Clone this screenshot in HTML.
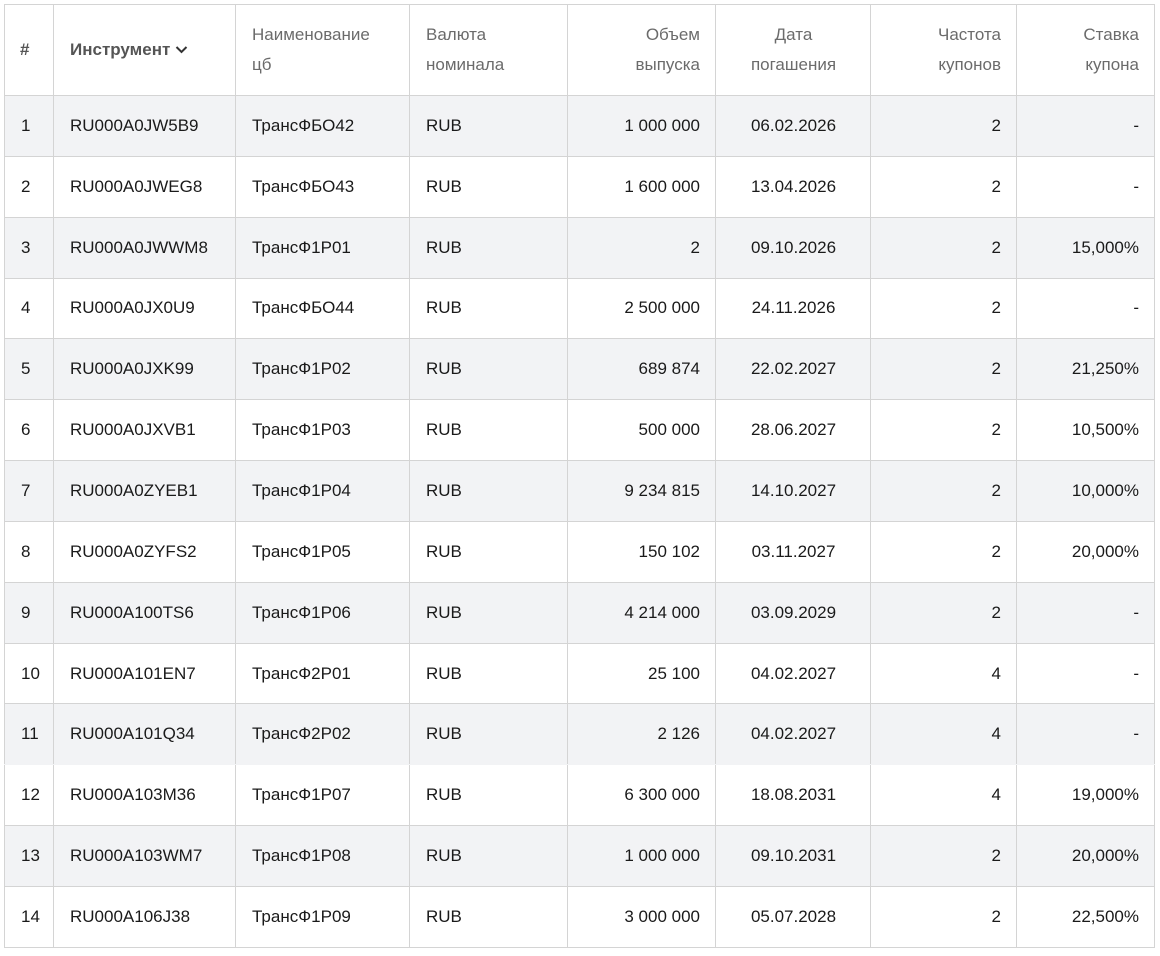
<!DOCTYPE html>
<html><head><meta charset="utf-8"><style>
body{margin:0;background:#fff;font-family:"Liberation Sans",Arial,sans-serif;}
table{position:absolute;left:4px;top:4px;border-collapse:collapse;table-layout:fixed;width:1151px;border-left:1px solid #d4d4d4;border-top:1px solid #d4d4d4;}
td,th{border-right:1px solid #d4d4d4;border-bottom:1px solid #d4d4d4;padding:0 15px 0 16px;font-size:17px;color:#1a1a1a;height:59.85px;white-space:nowrap;font-weight:normal;text-align:left;}
th{height:90px;color:#6b6b6b;font-size:17px;line-height:30px;vertical-align:middle;}
th.b{font-weight:bold;color:#555}
.r{text-align:right}.c{text-align:center}
tr.g td{background:#f2f3f5}
tr.n td{border-bottom-color:#f2f3f5}
</style></head><body>
<table>
<colgroup><col style="width:49px"><col style="width:182px"><col style="width:174px"><col style="width:158px"><col style="width:148px"><col style="width:155px"><col style="width:146px"><col style="width:138px"></colgroup>
<tr><th class="b" style="padding-left:15px">#</th><th class="b">Инструмент <svg width="13" height="9" viewBox="0 0 13 9" style="vertical-align:1px"><path d="M1.5 2l5 5 5-5" fill="none" stroke="#333" stroke-width="2"/></svg></th><th>Наименование<br>цб</th><th>Валюта<br>номинала</th><th class="r">Объем<br>выпуска</th><th class="c">Дата<br>погашения</th><th class="r">Частота<br>купонов</th><th class="r">Ставка<br>купона</th></tr>
<tr class="g"><td>1</td><td>RU000A0JW5B9</td><td>ТрансФБО42</td><td>RUB</td><td class="r">1 000 000</td><td class="c">06.02.2026</td><td class="r">2</td><td class="r">-</td></tr>
<tr><td>2</td><td>RU000A0JWEG8</td><td>ТрансФБО43</td><td>RUB</td><td class="r">1 600 000</td><td class="c">13.04.2026</td><td class="r">2</td><td class="r">-</td></tr>
<tr class="g"><td>3</td><td>RU000A0JWWM8</td><td>ТрансФ1Р01</td><td>RUB</td><td class="r">2</td><td class="c">09.10.2026</td><td class="r">2</td><td class="r">15,000%</td></tr>
<tr><td>4</td><td>RU000A0JX0U9</td><td>ТрансФБО44</td><td>RUB</td><td class="r">2 500 000</td><td class="c">24.11.2026</td><td class="r">2</td><td class="r">-</td></tr>
<tr class="g"><td>5</td><td>RU000A0JXK99</td><td>ТрансФ1Р02</td><td>RUB</td><td class="r">689 874</td><td class="c">22.02.2027</td><td class="r">2</td><td class="r">21,250%</td></tr>
<tr><td>6</td><td>RU000A0JXVB1</td><td>ТрансФ1Р03</td><td>RUB</td><td class="r">500 000</td><td class="c">28.06.2027</td><td class="r">2</td><td class="r">10,500%</td></tr>
<tr class="g"><td>7</td><td>RU000A0ZYEB1</td><td>ТрансФ1Р04</td><td>RUB</td><td class="r">9 234 815</td><td class="c">14.10.2027</td><td class="r">2</td><td class="r">10,000%</td></tr>
<tr><td>8</td><td>RU000A0ZYFS2</td><td>ТрансФ1Р05</td><td>RUB</td><td class="r">150 102</td><td class="c">03.11.2027</td><td class="r">2</td><td class="r">20,000%</td></tr>
<tr class="g"><td>9</td><td>RU000A100TS6</td><td>ТрансФ1Р06</td><td>RUB</td><td class="r">4 214 000</td><td class="c">03.09.2029</td><td class="r">2</td><td class="r">-</td></tr>
<tr><td>10</td><td>RU000A101EN7</td><td>ТрансФ2Р01</td><td>RUB</td><td class="r">25 100</td><td class="c">04.02.2027</td><td class="r">4</td><td class="r">-</td></tr>
<tr class="g n"><td>11</td><td>RU000A101Q34</td><td>ТрансФ2Р02</td><td>RUB</td><td class="r">2 126</td><td class="c">04.02.2027</td><td class="r">4</td><td class="r">-</td></tr>
<tr><td>12</td><td>RU000A103M36</td><td>ТрансФ1Р07</td><td>RUB</td><td class="r">6 300 000</td><td class="c">18.08.2031</td><td class="r">4</td><td class="r">19,000%</td></tr>
<tr class="g"><td>13</td><td>RU000A103WM7</td><td>ТрансФ1Р08</td><td>RUB</td><td class="r">1 000 000</td><td class="c">09.10.2031</td><td class="r">2</td><td class="r">20,000%</td></tr>
<tr><td>14</td><td>RU000A106J38</td><td>ТрансФ1Р09</td><td>RUB</td><td class="r">3 000 000</td><td class="c">05.07.2028</td><td class="r">2</td><td class="r">22,500%</td></tr>
</table>
</body></html>
